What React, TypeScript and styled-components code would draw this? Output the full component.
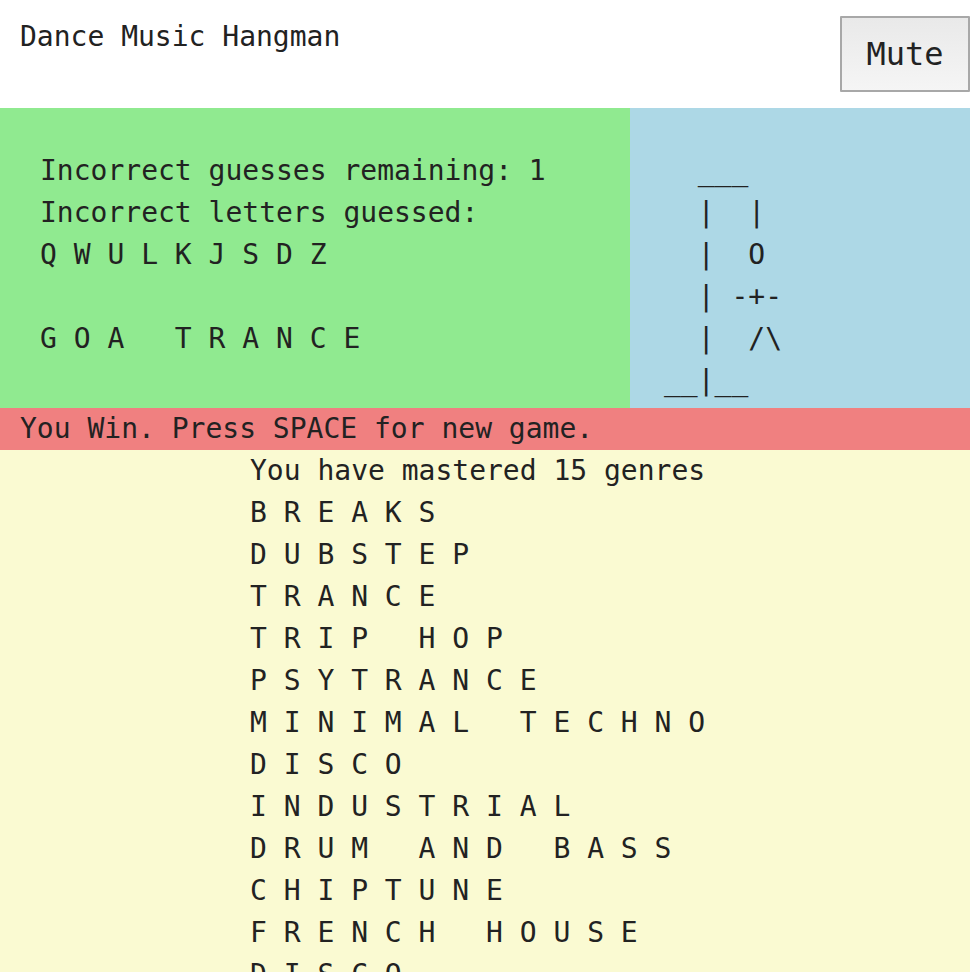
import React from 'react';
import styled, { createGlobalStyle } from 'styled-components';

const GlobalStyle = createGlobalStyle`
  html, body {
    margin: 0;
    padding: 0;
    background: #fff;
  }
  body {
    font-family: 'DejaVu Sans Mono', 'Liberation Mono', monospace;
    color: #222;
    overflow: hidden;
  }
`;

const Page = styled.div`
  width: 970px;
  font-size: 28px;
  line-height: 42px;
`;

const Header = styled.header`
  display: flex;
  justify-content: space-between;
  align-items: flex-start;
  height: 108px;
  box-sizing: border-box;
  padding: 16px 0 0 20px;
`;

const Title = styled.div`
  line-height: 42px;
`;

const MuteButton = styled.button`
  width: 130px;
  height: 76px;
  font-family: 'DejaVu Sans Mono', 'Liberation Mono', monospace;
  font-size: 32px;
  color: #222;
  border: 2px solid #a8a8a8;
  border-radius: 1px;
  background: linear-gradient(#e9e9e9, #f5f5f5);
  padding: 0;
  cursor: pointer;
`;

const Board = styled.section`
  display: flex;
`;

const StatusPanel = styled.pre`
  flex: 0 0 630px;
  margin: 0;
  padding: 42px 0 0 40px;
  box-sizing: border-box;
  background: #90ea90;
  font: inherit;
  white-space: pre;
`;

const GallowsPanel = styled.pre`
  flex: 1;
  margin: 0;
  padding: 42px 0 6px 34px;
  background: #add8e6;
  font: inherit;
  white-space: pre;
`;

const Banner = styled.div`
  background: #f08080;
  padding-left: 20px;
  height: 42px;
  white-space: pre;
`;

const Mastered = styled.div`
  background: #fafad2;
  padding-left: 250px;
  min-height: 600px;
`;

const Line = styled.div`
  white-space: pre;
`;

const spaced = (word: string) => word.split('').join(' ');

const incorrect = ['Q', 'W', 'U', 'L', 'K', 'J', 'S', 'D', 'Z'];

const gallows = [
  '  ___',
  '  |  |',
  '  |  O',
  '  | -+-',
  '  |  /\\',
  '__|__',
].join('\n');

const genres = [
  'BREAKS',
  'DUBSTEP',
  'TRANCE',
  'TRIP HOP',
  'PSYTRANCE',
  'MINIMAL TECHNO',
  'DISCO',
  'INDUSTRIAL',
  'DRUM AND BASS',
  'CHIPTUNE',
  'FRENCH HOUSE',
  'DISCO',
  'HOUSE',
  'TECHNO',
  'JUNGLE',
];

export default function App() {
  const status = [
    'Incorrect guesses remaining: 1',
    'Incorrect letters guessed:',
    incorrect.join(' '),
    '',
    spaced('GOA TRANCE'),
  ].join('\n');

  return (
    <Page>
      <GlobalStyle />
      <Header>
        <Title>Dance Music Hangman</Title>
        <MuteButton>Mute</MuteButton>
      </Header>
      <Board>
        <StatusPanel>{status}</StatusPanel>
        <GallowsPanel>{gallows}</GallowsPanel>
      </Board>
      <Banner>You Win. Press SPACE for new game.</Banner>
      <Mastered>
        <Line>You have mastered {genres.length} genres</Line>
        {genres.map((g, i) => (
          <Line key={i}>{spaced(g)}</Line>
        ))}
      </Mastered>
    </Page>
  );
}
